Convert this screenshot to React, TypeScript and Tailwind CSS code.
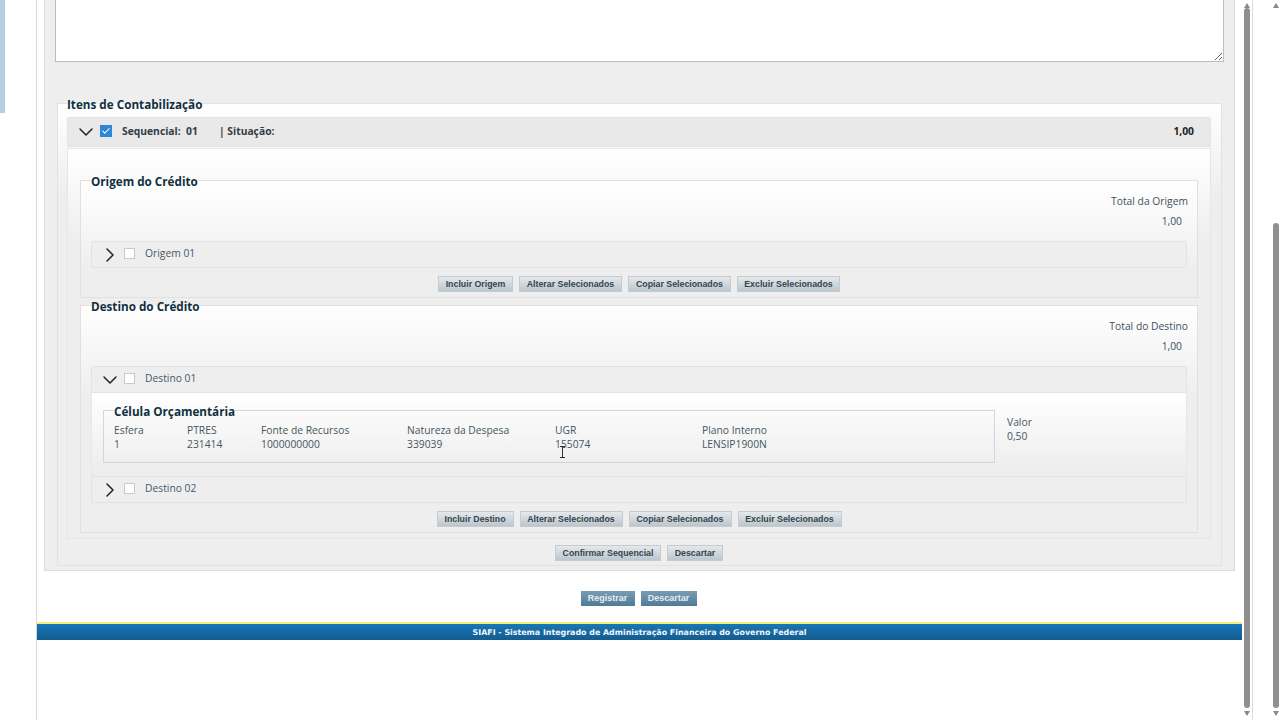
import type { ReactNode } from "react";
import { ChevronDown, ChevronRight, Check } from "lucide-react";

const panelGrad = "bg-[linear-gradient(#ffffff,#eeeeee_90px)]";

function Btn({ children, w }: { children: ReactNode; w: string }) {
  return (
    <button className={`${w} h-[16px] border border-[#c3ccd2] bg-gradient-to-b from-[#e6e9eb] to-[#bcc6cd] text-center font-['Liberation_Sans',sans-serif] text-[8.8px] leading-[14px] font-bold text-[#33454f]`}>
      {children}
    </button>
  );
}

function DarkBtn({ children, w }: { children: ReactNode; w: string }) {
  return (
    <button className={`${w} h-[15px] bg-gradient-to-b from-[#7a9cb2] to-[#4f7b97] text-center font-['Liberation_Sans',sans-serif] text-[9px] leading-[15px] font-bold text-[#e6eef3]`}>
      {children}
    </button>
  );
}

function Legend({ children }: { children: ReactNode }) {
  return <legend className="h-[17px] pt-[1px] text-[11.7px] leading-[16px] font-bold text-[#10303f]">{children}</legend>;
}

function AccRow({ label, open }: { label: string; open?: boolean }) {
  return (
    <div className="flex h-[27px] items-center rounded-[2px] border border-[#e2e2e2] bg-[#eeeeee] pl-[6px] text-[10.3px] text-[#46596a]">
      {open ? <ChevronDown size={24} strokeWidth={1.5} color="#222" /> : <ChevronRight size={24} strokeWidth={1.5} color="#222" />}
      <span className="mb-[3px] ml-[2px] h-[11px] w-[11px] border border-[#c9c9c9] bg-white" />
      <span className="mb-[1px] ml-[10px]">{label}</span>
    </div>
  );
}

function Total({ label }: { label: string }) {
  return (
    <div className="mt-[2px] -mr-[1px] flex flex-col items-end text-[10.3px] leading-[20px] text-[#3d525f]">
      <div>{label}</div>
      <div className="mr-[6px]">1,00</div>
    </div>
  );
}

const cols = [
  { w: "w-[73px]", h: "Esfera", v: "1" },
  { w: "w-[74px]", h: "PTRES", v: "231414" },
  { w: "w-[146px]", h: "Fonte de Recursos", v: "1000000000" },
  { w: "w-[148px]", h: "Natureza da Despesa", v: "339039" },
  { w: "w-[147px]", h: "UGR", v: "155074" },
  { w: "w-[150px]", h: "Plano Interno", v: "LENSIP1900N" },
];

function Scrollbar({ top, x }: { top: string; x: string }) {
  return (
    <div className={`flex h-[720px] w-[8px] flex-col items-center ${x}`}>
      <div className="mt-[3px] h-0 w-0 border-x-[3px] border-b-[5px] border-x-transparent border-b-[#888]" />
      <div className={`${top} w-[6px] flex-1 rounded-[3px] bg-[#8f8f8f]`} />
      <div className="mt-[3px] mb-[4px] h-0 w-0 border-x-[3px] border-t-[5px] border-x-transparent border-t-[#888]" />
    </div>
  );
}

export default function App() {
  return (
    <div className="flex h-[720px] w-[1280px] overflow-hidden bg-white font-['Open_Sans',sans-serif]">
      <div className="h-full w-[37px] shrink-0 border-r border-[#d8d8d8]">
        <div className="h-[113px] w-[5px] bg-[#b2cde4]" />
      </div>

      <div className="relative w-[1205px] shrink-0">
        <div className="ml-[7px] h-[571px] w-[1191px] border-x border-b border-[#dddddd] bg-[#eeeeee] pl-[10px]">
          <textarea readOnly className="block h-[62px] w-[1169px] border-x border-b border-[#bdbdbd] bg-white" />

          <fieldset className={`mt-[33px] ml-[2px] h-[471px] w-[1165px] border border-[#e2e2e2] ${panelGrad} pr-[10px] pl-[9px]`}>
            <Legend>Itens de Contabilização</Legend>
            <div className="mt-[5px] flex h-[30px] items-center rounded-[2px] border border-[#e4e4e4] bg-[#e9e9e9] pl-[6px] text-[10.3px] font-bold text-[#333d44]">
              <ChevronDown size={24} strokeWidth={1.5} color="#222" />
              <span className="mb-[2px] ml-[2px] flex h-[12px] w-[12px] items-center justify-center bg-[#2d87d3]">
                <Check size={10} strokeWidth={2.5} color="#fff" />
              </span>
              <span className="ml-[10px] w-[64px]">Sequencial:</span>
              <span className="w-[33px]">01</span>
              <span>| Situação:</span>
              <span className="mr-[16px] ml-auto text-[#222]">1,00</span>
            </div>

            <div className={`mt-[1px] h-[391px] border border-[#e6e6e6] ${panelGrad} px-[12px] pt-[23px]`}>
              <fieldset className={`border border-[#e0e0e0] ${panelGrad} px-[10px] pb-[5px]`}>
                <Legend>Origem do Crédito</Legend>
                <Total label="Total da Origem" />
                <div className="mt-[10px]">
                  <AccRow label="Origem 01" />
                </div>
                <div className="mt-[8px] flex justify-center gap-[6px]">
                  <Btn w="w-[75px]">Incluir Origem</Btn>
                  <Btn w="w-[103px]">Alterar Selecionados</Btn>
                  <Btn w="w-[103px]">Copiar Selecionados</Btn>
                  <Btn w="w-[103px]">Excluir Selecionados</Btn>
                </div>
              </fieldset>

              <fieldset className={`-mt-[1px] border border-[#e0e0e0] ${panelGrad} px-[10px] pb-[5px]`}>
                <Legend>Destino do Crédito</Legend>
                <Total label="Total do Destino" />
                <div className="mt-[10px]">
                  <AccRow label="Destino 01" open />
                  <div className="flex h-[83px] border-x border-[#e6e6e6] bg-[linear-gradient(#ffffff,#ececec)] pt-[9px] pl-[11px]">
                    <fieldset className="h-[61px] w-[892px] border border-[#d6d6d6] px-[10px]">
                      <Legend>Célula Orçamentária</Legend>
                      <div className="mt-[4px] flex text-[10.3px] leading-[14px] text-[#46565f]">
                        {cols.map((c) => (
                          <div key={c.h} className={c.w}>
                            <div>{c.h}</div>
                            <div>{c.v}</div>
                          </div>
                        ))}
                      </div>
                    </fieldset>
                    <div className="mt-[13px] ml-[12px] text-[10.3px] leading-[14px] text-[#46565f]">
                      <div>Valor</div>
                      <div>0,50</div>
                    </div>
                  </div>
                  <AccRow label="Destino 02" />
                </div>
                <div className="mt-[8px] flex justify-center gap-[6px]">
                  <Btn w="w-[77px]">Incluir Destino</Btn>
                  <Btn w="w-[103px]">Alterar Selecionados</Btn>
                  <Btn w="w-[103px]">Copiar Selecionados</Btn>
                  <Btn w="w-[104px]">Excluir Selecionados</Btn>
                </div>
              </fieldset>
            </div>

            <div className="mt-[6px] flex justify-center gap-[6px]">
              <Btn w="w-[106px]">Confirmar Sequencial</Btn>
              <Btn w="w-[56px]">Descartar</Btn>
            </div>
          </fieldset>
        </div>

        <div className="mt-[20px] flex justify-center gap-[6px] pr-[2px]">
          <DarkBtn w="w-[54px]">Registrar</DarkBtn>
          <DarkBtn w="w-[56px]">Descartar</DarkBtn>
        </div>

        <div className="mt-[16px] h-[18px] border-t-[2px] border-[#f5ec7e] bg-gradient-to-b from-[#1877b8] to-[#135c8f] text-center font-['DejaVu_Sans',sans-serif] text-[7.9px] leading-[17px] font-bold text-[#f2f6f9]">
          SIAFI - Sistema Integrado de Administração Financeira do Governo Federal
        </div>

        {/* text cursor over the UGR value */}
        <svg className="absolute top-[446px] left-[522px]" width="7" height="12" viewBox="0 0 7 12" fill="none" stroke="#333" strokeWidth="1">
          <path d="M1 .5h5M3.5.5v11M1 11.5h5" />
        </svg>
      </div>

      <Scrollbar top="" x="ml-[1px] border-r border-[#dddddd] box-content pr-[1px]" />
      <div className="w-[19px] shrink-0" />
      <Scrollbar top="mt-[215px]" x="" />
    </div>
  );
}
